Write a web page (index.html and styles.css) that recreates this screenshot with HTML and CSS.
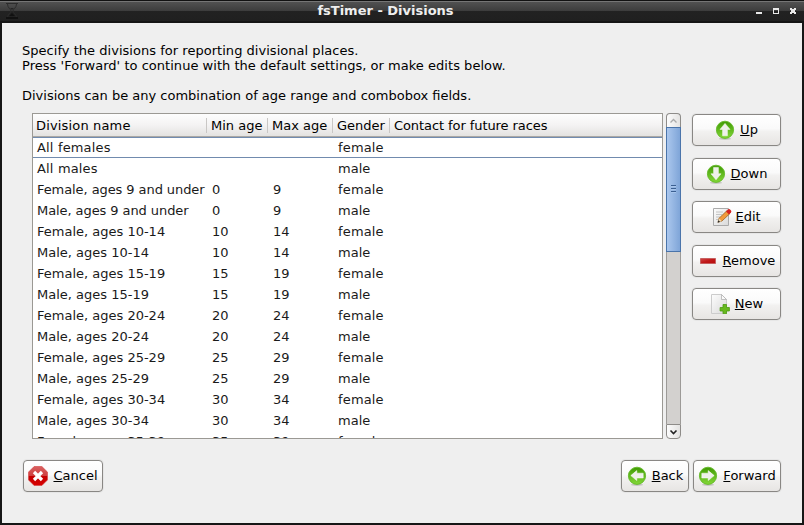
FILE: index.html
```html
<!DOCTYPE html>
<html lang="en">
<head>
<meta charset="utf-8">
<title>fsTimer - Divisions</title>
<link rel="stylesheet" href="styles.css">
</head>
<body>
<svg class="defs" width="0" height="0">
  <defs>
    <linearGradient id="green" x1="0" y1="0" x2="0" y2="1"><stop offset="0" stop-color="#3f9a04"/><stop offset="1" stop-color="#84d838"/></linearGradient>
    <linearGradient id="red" x1="0" y1="0" x2="0" y2="1"><stop offset="0" stop-color="#d86060"/><stop offset=".48" stop-color="#d04040"/><stop offset=".52" stop-color="#c40000"/><stop offset="1" stop-color="#d80000"/></linearGradient>
    <linearGradient id="bar" x1="0" y1="0" x2="1" y2="1"><stop offset="0" stop-color="#d04848"/><stop offset=".5" stop-color="#c01818"/><stop offset="1" stop-color="#b80c0c"/></linearGradient>
    <linearGradient id="paper" x1="0" y1="0" x2="1" y2="1"><stop offset="0" stop-color="#fdfdfd"/><stop offset="1" stop-color="#d9d9d9"/></linearGradient>
    <symbol id="disc" viewBox="0 0 20 20"><ellipse cx="10" cy="18.8" rx="6" ry="1.1" fill="#000" opacity=".16"/><circle cx="10" cy="9.8" r="8.6" fill="url(#green)" stroke="#62b926" stroke-width=".9"/></symbol>
    <symbol id="arrow" viewBox="0 0 20 20"><path d="M10 3.4 15 9.4H12.4V15.8H7.6V9.4H5Z" fill="#eef0ea" stroke="#fff" stroke-width=".5" stroke-linejoin="round"/></symbol>
  </defs>
</svg>
<div class="window">
  <header class="titlebar">
    <svg class="app-icon" width="14" height="18" viewBox="0 0 14 18"><path d="M1 1.5H13M2.5 2C2.5 6 6 7 6 9S2.5 12 2.5 16M11.5 2C11.5 6 8 7 8 9S11.5 12 11.5 16" fill="none" stroke="#2c2c2c"/><path d="M1 15H13V17H1ZM4 14 7 11 10 14Z" fill="#111"/><path d="M5 6H9L7 8Z" fill="#262626"/></svg>
    <h1>fsTimer - Divisions</h1>
    <svg class="controls" width="42" height="8" viewBox="0 0 42 8" shape-rendering="crispEdges"><path d="M0 5H6V7H0Z" fill="#e8e8e8"/><path d="M17 1H23V7H17ZM18 3V6H22V3Z" fill="#e8e8e8" fill-rule="evenodd"/><path d="M34 1H36V2H38V1H40V3H39V5H40V7H38V6H36V7H34V5H35V3H34Z" fill="#e8e8e8"/></svg>
  </header>
  <main>
    <p class="intro"><span class="wide">Specify the divisions for reporting divisional places.<br>Press 'Forward' to continue with the default settings, or make edits below.</span><br><br>Divisions can be any combination of age range and combobox fields.</p>
    <div class="editor">
      <div class="list">
        <div class="row head"><span class="wider">Division name</span><span>Min age</span><span>Max age</span><span>Gender</span><span class="narrow">Contact for future races</span></div>
        <div class="row selected"><span class="wider">All females</span><span></span><span></span><span class="wider">female</span></div>
        <div class="row"><span class="wider">All males</span><span></span><span></span><span>male</span></div>
        <div class="row"><span class="narrow">Female, ages 9 and under</span><span>0</span><span>9</span><span class="wider">female</span></div>
        <div class="row"><span class="narrow">Male, ages 9 and under</span><span>0</span><span>9</span><span>male</span></div>
        <div class="row"><span>Female, ages 10-14</span><span>10</span><span>14</span><span class="wider">female</span></div>
        <div class="row"><span>Male, ages 10-14</span><span>10</span><span>14</span><span>male</span></div>
        <div class="row"><span>Female, ages 15-19</span><span>15</span><span>19</span><span class="wider">female</span></div>
        <div class="row"><span>Male, ages 15-19</span><span>15</span><span>19</span><span>male</span></div>
        <div class="row"><span>Female, ages 20-24</span><span>20</span><span>24</span><span class="wider">female</span></div>
        <div class="row"><span>Male, ages 20-24</span><span>20</span><span>24</span><span>male</span></div>
        <div class="row"><span>Female, ages 25-29</span><span>25</span><span>29</span><span class="wider">female</span></div>
        <div class="row"><span>Male, ages 25-29</span><span>25</span><span>29</span><span>male</span></div>
        <div class="row"><span>Female, ages 30-34</span><span>30</span><span>34</span><span class="wider">female</span></div>
        <div class="row"><span>Male, ages 30-34</span><span>30</span><span>34</span><span>male</span></div>
        <div class="row"><span>Female, ages 35-39</span><span>35</span><span>39</span><span class="wider">female</span></div>
      </div>
      <div class="scrollbar">
        <div class="step"><svg width="9" height="6" viewBox="0 0 9 6"><path d="M1.5 4.5 4.5 1.5 7.5 4.5" fill="none" stroke="#aaa" stroke-width="1.3"/></svg></div>
        <div class="thumb"><i></i><i></i><i></i></div>
        <div class="trough"></div>
        <div class="step end"><svg width="9" height="6" viewBox="0 0 9 6"><path d="M1.5 1.5 4.5 4.5 7.5 1.5" fill="none" stroke="#222" stroke-width="1.6"/></svg></div>
      </div>
      <div class="actions">
        <button><svg class="icon" viewBox="0 0 20 20"><use href="#disc"/><use href="#arrow"/></svg><span><u>U</u>p</span></button>
        <button><svg class="icon" viewBox="0 0 20 20"><use href="#disc"/><use href="#arrow" transform="rotate(180 10 9.6)"/></svg><span><u>D</u>own</span></button>
        <button class="edit"><svg class="icon" viewBox="0 0 20 20"><path d="M1.5 1.5H16.5V18.5H1.5Z" fill="url(#paper)" stroke="#aaa"/><path d="M4 5H11M4 7.5H10M4 10H8M4 12.5H7" stroke="#c4c4c4"/><path d="M6 15.2 7 11.3 15 3.6 18 6.4 9.8 14.2Z" fill="#f29a3a" stroke="#8c5a22" stroke-width=".7"/><path d="M6 15.2 7 11.3 9.8 14.2Z" fill="#ead7b4"/><path d="M5.5 15.7 6.5 13.2 8 14.7Z" fill="#222"/><path d="M14 4.4 16 2.4Q17.2 1.6 18.6 3T19 5.4L17 7.4Z" fill="#d42020"/></svg><span><u>E</u>dit</span></button>
        <button><svg class="icon" viewBox="0 0 20 20"><path d="M2.5 7.5H17.5V12.5H2.5Z" fill="url(#bar)" stroke="#c66060"/></svg><span><u>R</u>emove</span></button>
        <button><svg class="icon" viewBox="0 0 20 20"><path d="M1.5 .5H11.5L16.5 5.5V19.5H1.5Z" fill="url(#paper)" stroke="#ccc"/><path d="M11.5 .5V5.5H16.5Z" fill="#fafafa" stroke="#aaa" stroke-width=".7"/><path d="M13 10.5H16.5V13.5H19.4V17H16.5V19.8H13V17H10.1V13.5H13Z" fill="#67b91e" stroke="#4b9a12" stroke-width=".8"/></svg><span><u>N</u>ew</span></button>
      </div>
    </div>
    <footer>
      <button class="cancel"><svg class="icon" viewBox="0 0 20 20"><path d="M6.1.5H13.9L19.5 6.1V13.9L13.9 19.5H6.1L.5 13.9V6.1Z" fill="url(#red)" stroke="#d33f3f" stroke-width=".6"/><path d="M6 6 14 14M14 6 6 14" stroke="#fff" stroke-width="3.2"/></svg><span><u>C</u>ancel</span></button>
      <button class="back"><svg class="icon" viewBox="0 0 20 20"><use href="#disc"/><use href="#arrow" transform="rotate(270 10 9.6)"/></svg><span><u>B</u>ack</span></button>
      <button class="forward"><svg class="icon" viewBox="0 0 20 20"><use href="#disc"/><use href="#arrow" transform="rotate(90 10 9.6)"/></svg><span><u>F</u>orward</span></button>
    </footer>
  </main>
</div>
</body>
</html>
```
FILE: styles.css
```css
* { box-sizing: border-box; }
body { margin: 0; font: 13px/15px "DejaVu Sans", sans-serif; color: #000; overflow: hidden; }
.defs { display: block; position: absolute; }
.window { width: 804px; height: 525px; background: #161616; display: flex; flex-direction: column; }
.titlebar { height: 23px; display: flex; align-items: center; padding: 0 8px 0 5px; border-top: 1px solid #111; border-bottom: 2px solid #151515; background: linear-gradient(#757575 0 1px, #515151 1px, #3c3c3c 10px, #222 10px, #202020 100%); }
.titlebar h1 { flex: 1; margin: 0; padding: 0 4px 1px 0; text-align: center; font-size: 13px; line-height: 15px; color: #eee; }
.controls { margin-right: -2px; }
main { height: 500px; margin: 0 2px; background: #efefef; padding: 20px 21px 0 20px; }
.intro { margin: 0; height: 70px; }
.wide { letter-spacing: .03px; }
.wider { letter-spacing: .16px; }
.narrow { letter-spacing: -.08px; }
.editor { display: flex; margin-left: 10px; height: 326px; }
.list { width: 631px; border: 1px solid #9b9994; background: #fff; overflow: hidden; color: #1a1a1a; }
.row { display: grid; grid-template-columns: 174px 61px 65px 57px 1fr; height: 21px; line-height: 21px; white-space: nowrap; }
.row span { padding-left: 4px; }
.row span + span { padding-left: 5px; }
.head { height: 23px; line-height: 24px; color: #000; background: linear-gradient(#fdfdfd, #f4f3f3 50%, #e3e2e0); border-bottom: 1px solid #aaa8a4; }
.head span { padding-left: 3px; height: 22px; }
.head span + span { padding-left: 4px; }
.head span:not(:last-child) { background: linear-gradient(#c9c7c5, #c9c7c5) 100% 4px / 1px 15px no-repeat; }
.selected { border-top: 1px solid #718bae; border-bottom: 1px solid #718bae; line-height: 20px; }
.scrollbar { width: 15px; margin-left: 3px; display: flex; flex-direction: column; }
.step { height: 14px; border: 1px solid #8e8c89; border-bottom: 0; border-radius: 4px 4px 0 0; background: linear-gradient(90deg, #fcfcfc, #e4e3e2); display: flex; align-items: center; justify-content: center; }
.step.end { height: 15px; border: 1px solid #8e8c89; border-radius: 0 0 4px 4px; }
.thumb { height: 125px; border: 1px solid #4a74aa; background: linear-gradient(90deg, #abc7ed, #7fa5d8); display: flex; flex-direction: column; align-items: center; justify-content: center; gap: 2px; padding-bottom: 2px; }
.thumb i { width: 5px; height: 1px; background: #3b5f91; box-shadow: 0 1px #a9c6ec; }
.trough { flex: 1; background: #d3d1cf; border: 1px solid #9c9a97; border-width: 0 1px; }
.actions { margin: 1px 0 0 11px; display: grid; grid-template-rows: 32px 32px 32px 32px 32px; row-gap: 11.5px; align-content: start; }
button { width: 89px; height: 32px; padding: 0; border: 1px solid #898784; border-radius: 4px; background: linear-gradient(#fff, #fafafa 45%, #f2f1f0 55%, #e7e5e3); font: inherit; color: #000; display: flex; align-items: center; justify-content: center; gap: 5px; box-shadow: 0 0 0 1px #e6e6e6; }
button span { padding-bottom: 1px; }
.edit { gap: 3px; }
.icon { width: 20px; height: 20px; flex: none; }
u { text-decoration: underline 1px; text-underline-offset: 1px; text-decoration-skip-ink: none; }
footer { display: flex; margin-top: 21px; padding-left: 1px; }
.cancel { width: 80px; }
.back { width: 68px; margin-left: auto; }
.forward { width: 88px; margin-left: 4px; }
```
